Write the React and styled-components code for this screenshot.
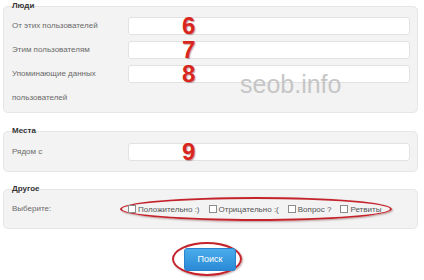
import styled, { createGlobalStyle } from "styled-components";

const GlobalStyle = createGlobalStyle`
 html, body {
  margin: 0;
  padding: 0;
  background: #ffffff;
 }
 body {
  font-family: "Liberation Sans", Arial, sans-serif;
  font-size: 8px;
  color: #666;
 }
`;

const Page = styled.div`
 width: 424px;
 height: 280px;
 padding-top: 1px;
 box-sizing: border-box;
 overflow: hidden;
`;

const Panel = styled.fieldset`
 position: relative;
 margin: ${(p) => p.$top || 0}px 6px 0 3px;
 padding: ${(p) => p.$padTop || 3}px 7px ${(p) => p.$padBottom || 3}px 8px;
 background: #f3f3f3;
 border: 1px solid #e6e6e6;
 border-radius: 5px;
 min-width: 0;
`;

const Legend = styled.legend`
 padding: 0;
 font-weight: bold;
 font-size: 8px;
 line-height: 10px;
 color: #333;
`;

const Row = styled.div`
 display: grid;
 grid-template-columns: 116px 1fr;
 align-items: start;
`;

const Label = styled.div`
 width: 96px;
 line-height: 24px;
 color: #6a6a6a;
`;

const Field = styled.div`
 position: relative;
 margin-top: 3px;
`;

const Input = styled.input`
 display: block;
 width: 100%;
 height: 18px;
 box-sizing: border-box;
 margin: 0;
 border: 1px solid #e2e2e2;
 border-radius: 3px;
 background: #fff;
 outline: none;
`;

const Mark = styled.span`
 position: absolute;
 left: 54px;
 top: 0;
 font-family: "Liberation Sans", Arial, sans-serif;
 font-weight: bold;
 font-size: 24px;
 line-height: 18px;
 color: #d8261f;
 text-shadow: 1px 1px 1px rgba(90, 0, 0, 0.35);
 pointer-events: none;
`;

const Watermark = styled.span`
 position: absolute;
 left: 236px;
 top: 58px;
 font-family: "Liberation Sans", Arial, sans-serif;
 font-size: 25px;
 line-height: 30px;
 color: #c6c6c6;
 pointer-events: none;
`;

const Pill = styled.div`
 display: flex;
 align-items: center;
 gap: 9px;
 margin-left: -8px;
 width: 272px;
 height: 24px;
 padding-left: 6px;
 box-sizing: border-box;
 border: 2px solid #c4232b;
 border-radius: 50%;
 box-shadow: 1px 1px 2px rgba(80, 0, 0, 0.35);
`;

const Choice = styled.label`
 display: flex;
 align-items: center;
 font-size: 8px;
 color: #555;
 white-space: nowrap;
`;

const Box = styled.input`
 appearance: none;
 width: 8px;
 height: 8px;
 margin: 0 2px 0 0;
 border: 1px solid #8c8c8c;
 background: #fff;
`;

const Actions = styled.div`
 display: flex;
 justify-content: center;
 padding: 13px 10px 0 0;
`;

const Ring = styled.div`
 display: flex;
 align-items: center;
 justify-content: center;
 width: 70px;
 height: 34px;
 box-sizing: border-box;
 border: 2px solid #c4232b;
 border-radius: 50%;
 box-shadow: 1px 1px 2px rgba(80, 0, 0, 0.35);
`;

const Button = styled.button`
 width: 52px;
 height: 23px;
 margin-left: 6px;
 border: 1px solid #2a82cc;
 border-radius: 3px;
 background: linear-gradient(#4aaceb, #2a8ad6);
 color: #fff;
 font-family: "Liberation Sans", Arial, sans-serif;
 font-size: 9px;
 cursor: pointer;
`;

const people = [
 { label: "От этих пользователей", mark: "6" },
 { label: "Этим пользователям", mark: "7" },
 { label: "Упоминающие данных пользователей", mark: "8" },
];

const choices = ["Положительно :)", "Отрицательно :(", "Вопрос ?", "Ретвиты"];

const App = () => {
 return (
  <Page>
   <GlobalStyle />
   <Panel $padTop={3} $padBottom={2}>
    <Legend>Люди</Legend>
    {people.map((p) => (
     <Row key={p.mark}>
      <Label>{p.label}</Label>
      <Field>
       <Input type="text" />
       <Mark>{p.mark}</Mark>
      </Field>
     </Row>
    ))}
    <Watermark>seob.info</Watermark>
   </Panel>

   <Panel $top={13} $padTop={4} $padBottom={7}>
    <Legend>Места</Legend>
    <Row>
     <Label>Рядом с</Label>
     <Field>
      <Input type="text" />
      <Mark>9</Mark>
     </Field>
    </Row>
   </Panel>

   <Panel $top={12} $padTop={3} $padBottom={7}>
    <Legend>Другое</Legend>
    <Row>
     <Label>Выберите:</Label>
     <Pill>
      {choices.map((c) => (
       <Choice key={c}>
        <Box type="checkbox" />
        {c}
       </Choice>
      ))}
     </Pill>
    </Row>
   </Panel>

   <Actions>
    <Ring>
     <Button>Поиск</Button>
    </Ring>
   </Actions>
  </Page>
 );
};

export default App;
